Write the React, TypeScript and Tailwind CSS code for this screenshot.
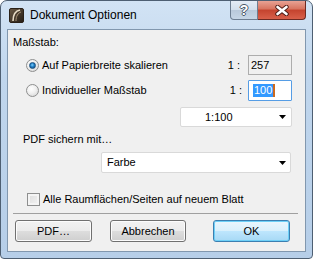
import React from "react";

function Radio({ checked }: { checked?: boolean }) {
  return (
    <div className="w-[13px] h-[13px] rounded-full border border-[#8e8f8f] bg-[radial-gradient(circle_at_40%_35%,#ffffff_0%,#f0f0f0_45%,#cfcfcf_100%)] flex items-center justify-center">
      {checked && (
        <div className="w-[7px] h-[7px] rounded-full bg-[radial-gradient(circle_at_45%_40%,#7fd1ff_0%,#1f7fc6_45%,#0d3f74_100%)] border border-[#1c5180]" />
      )}
    </div>
  );
}

function Arrow() {
  return (
    <svg width="7" height="4" viewBox="0 0 7 4">
      <path d="M0 0H7L3.5 4Z" fill="#000" />
    </svg>
  );
}

function Btn({ label, def, cls }: { label: string; def?: boolean; cls: string }) {
  return (
    <div
      className={
        "h-[22px] rounded-[3px] border flex items-center justify-center text-[11px] text-black " +
        cls +
        " " +
        (def
          ? "border-[#3c7fb1] bg-[linear-gradient(#eaf6fd_0%,#d9f0fc_50%,#bee6fd_51%,#a7d9f5_100%)] shadow-[inset_0_0_0_1px_#6ed0f7]"
          : "border-[#707070] bg-[linear-gradient(#f2f2f2_0%,#ebebeb_50%,#dddddd_51%,#cfcfcf_100%)] shadow-[inset_0_0_0_1px_#fcfcfc]")
      }
    >
      {label}
    </div>
  );
}

export default function App() {
  return (
    <div
      className="w-[313px] h-[259px] rounded-t-[7px] rounded-b-[4px] border border-[#4e5f72] bg-[linear-gradient(#d2e3f4_0%,#c0d6ed_30%,#b6cee8_100%)] flex flex-col px-[6px] pb-[6px]"
      style={{ fontFamily: '"Liberation Sans", Arial, sans-serif' }}
    >
      <div className="h-[28px] flex items-start shrink-0">
        <div className="mt-[7px] ml-[2px]">
          <svg width="15" height="15" viewBox="0 0 15 15">
            <defs>
              <linearGradient id="ig" x1="0" y1="0" x2="1" y2="1">
                <stop offset="0" stopColor="#6b5a45" />
                <stop offset="1" stopColor="#241c14" />
              </linearGradient>
            </defs>
            <rect x="0.5" y="0.5" width="14" height="14" rx="1.5" fill="url(#ig)" stroke="#2a2118" />
            <path d="M4 13 C4 7 6 3 11 2" stroke="#e8dcc6" strokeWidth="1.6" fill="none" />
            <path d="M7 13 C7 8 9 5 12 4" stroke="#a89478" strokeWidth="1" fill="none" />
          </svg>
        </div>
        <div className="ml-[6px] mt-[6px] text-[12px] leading-[16px] text-black">Dokument Optionen</div>
        <div className="flex-1" />
        <div className="flex">
          <div className="w-[28px] h-[19px] border border-t-0 border-[#6d7e91] rounded-bl-[4px] bg-[linear-gradient(#e4ecf5_0%,#d2dfec_50%,#b9c9da_51%,#c6d6e6_100%)] flex items-center justify-center">
            <span className="text-[14px] font-bold text-white leading-none [text-shadow:1px_0_0_#4a5868,-1px_0_0_#4a5868,0_1px_0_#4a5868,0_-1px_0_#4a5868]">?</span>
          </div>
          <div className="w-[48px] h-[19px] border border-t-0 border-l-0 border-[#6d2a22] rounded-br-[4px] bg-[linear-gradient(#e8a294_0%,#d7735e_45%,#c4432e_50%,#d8604a_100%)] flex items-center justify-center">
            <svg width="14" height="11" viewBox="0 0 14 11">
              <path d="M2.5 2L11.5 9M11.5 2L2.5 9" stroke="#4a1a14" strokeWidth="4.4" strokeLinecap="round" />
              <path d="M2.5 2L11.5 9M11.5 2L2.5 9" stroke="#ffffff" strokeWidth="2.6" strokeLinecap="round" />
            </svg>
          </div>
        </div>
      </div>

      <div className="flex-1 bg-[#f0f0f0] border border-[#8197ae] flex flex-col text-[11px] text-black">
        <div className="mt-[5px] pl-[5px] leading-[14px]">Maßstab:</div>

        <div className="mt-[6px] h-[20px] flex items-center pl-[18px] pr-[13px]">
          <Radio checked />
          <span className="ml-[3px]">Auf Papierbreite skalieren</span>
          <div className="flex-1" />
          <span className="mr-[8px]">1 :</span>
          <div className="w-[44px] h-[20px] border border-[#adadad] bg-[#f0f0f0] pl-[2px] flex items-center">257</div>
        </div>

        <div className="mt-[5px] h-[21px] flex items-center pl-[18px] pr-[13px]">
          <Radio />
          <span className="ml-[3px]">Individueller Maßstab</span>
          <div className="flex-1" />
          <span className="mr-[6px]">1 :</span>
          <div className="w-[44px] h-[21px] border border-[#569de5] rounded-[1px] bg-white pl-[4px] flex items-center">
            <span className="bg-[#3399ff] text-white leading-[13px] px-[1px]">100</span>
            <span className="w-[2px] h-[13px] bg-[#cc6a1f]" />
          </div>
        </div>

        <div className="mt-[6px] flex justify-end pr-[13px]">
          <div className="w-[112px] h-[20px] border border-[#d9d9d9] rounded-[2px] bg-white flex items-center pl-[24px] pr-[5px]">
            <span className="flex-1">1:100</span>
            <Arrow />
          </div>
        </div>

        <div className="mt-[5px] pl-[15px] leading-[14px]">PDF sichern mit…</div>

        <div className="mt-[6px] flex justify-end pr-[14px]">
          <div className="w-[190px] h-[21px] border border-[#d9d9d9] rounded-[2px] bg-white flex items-center pl-[5px] pr-[4px]">
            <span className="flex-1">Farbe</span>
            <Arrow />
          </div>
        </div>

        <div className="mt-[20px] h-[13px] flex items-center pl-[19px]">
          <div className="w-[13px] h-[13px] border border-[#8e8f8f] bg-[linear-gradient(135deg,#dcdcdc_0%,#f4f4f4_100%)] shadow-[inset_0_0_0_2px_#f4f4f4]" />
          <span className="ml-[3px]">Alle Raumflächen/Seiten auf neuem Blatt</span>
        </div>

        <div className="mt-[7px] ml-[5px] mr-[7px] h-px bg-[#a0a0a0]" />

        <div className="mt-[6px] flex pl-[7px]">
          <Btn label="PDF…" cls="w-[77px]" />
          <Btn label="Abbrechen" cls="ml-[18px] w-[76px]" />
          <Btn label="OK" def cls="ml-[27px] w-[77px]" />
        </div>
      </div>
    </div>
  );
}
